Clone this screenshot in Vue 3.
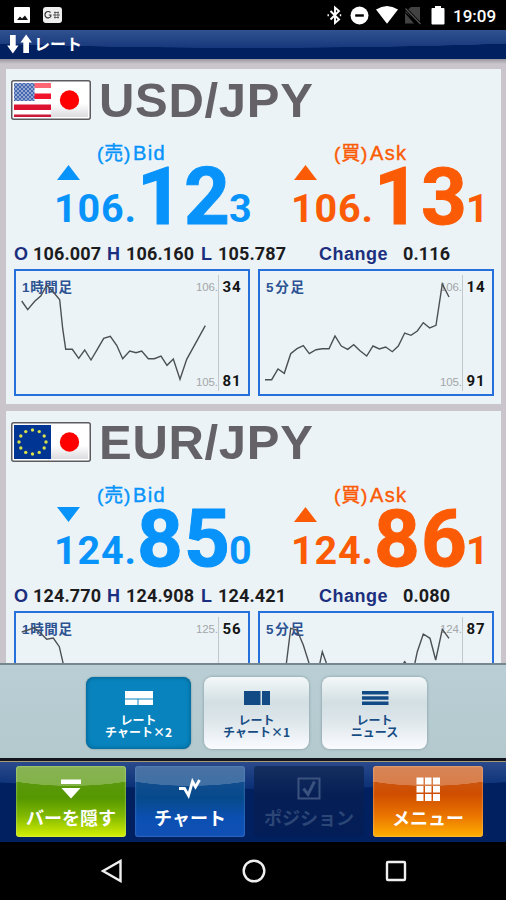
<template>
  <div class="screen">
    <div class="status-bar">
      <svg class="status-left" viewBox="0 0 60 30">
        <rect x="3" y="7" width="16" height="16" rx="1" fill="#fff" />
        <path d="M6 20 L9 16.5 L11 18.5 L14 15.5 L17 20 Z" fill="#111" />
        <rect x="32" y="7" width="19" height="16" rx="3" fill="#eee" />
        <path d="M39.5 12.5 a3.2 3.2 0 1 0 .3 4 v-1.5 h-2" fill="none" stroke="#333" stroke-width="1.2" />
        <path d="M43 12.5 h5 M42 15 h7 M43 17.5 h5 M44 11.5 v7 M47 11.5 v7" stroke="#555" stroke-width=".9" />
      </svg>
      <svg class="status-right" viewBox="0 0 120 30">
        <path d="M4.5 11 L13 19.5 L9 23 V7.5 L13 11 L4.5 19.5" fill="none" stroke="#fff" stroke-width="1.9" />
        <path d="M2.2 14.3 v2 M14.5 14.3 v2" stroke="#fff" stroke-width="1.4" />
        <circle cx="33.5" cy="15.5" r="9" fill="#fff" />
        <rect x="29.2" y="14.3" width="8.6" height="2.4" fill="#000" />
        <path d="M50 9.5 Q61 2.5 72 9.5 L61 23.7 Z" fill="#fff" />
        <path d="M79 12 L94 23 V7 H85 Z" fill="#424242" />
        <path d="M79 13 L88 23.5 H79 Z" fill="#424242" />
        <path d="M79.5 8.5 L94.5 24" stroke="#000" stroke-width="3" />
        <path d="M79.5 8.5 L94.5 24" stroke="#555" stroke-width="1.2" />
        <path d="M109 6 h6 v2 h2.5 q1 0 1 1 v14.5 q0 1 -1 1 h-11 q-1 0 -1 -1 v-14.5 q0 -1 1 -1 h2.5 Z" fill="#fff" />
      </svg>
      <span class="clock">19:09</span>
    </div>

    <header class="title-bar">
      <svg class="title-icon" viewBox="0 0 26 20">
        <path d="M3 0 h6 v11 h3 L6 19.5 L0 11 h3 Z M17 19 h6 V8 h3 L20 -.5 L14 8 h3 Z" fill="#fff" />
      </svg>
      <h1>レート</h1>
    </header>

    <main class="rates">
      <section class="card" v-for="pair in pairs" :key="pair.name">
        <div class="card-head">
          <svg class="flag" viewBox="0 0 80 40">
            <defs>
              <linearGradient :id="'shade-' + pair.flag" x1="0" y1="0" x2="0" y2="1">
                <stop offset=".6" stop-color="#fff" />
                <stop offset="1" stop-color="#dcdce0" />
              </linearGradient>
              <pattern id="stars" width="4" height="4" patternUnits="userSpaceOnUse">
                <rect width="4" height="4" fill="#4668ae" />
                <circle cx="1" cy="1" r=".9" fill="#b8c6e4" />
                <circle cx="3" cy="3" r=".9" fill="#b8c6e4" />
              </pattern>
            </defs>
            <rect x=".75" y=".75" width="78.5" height="38.5" rx="2" fill="#fff" stroke="#5c5c60" stroke-width="1.5" />
            <rect x="40" y="3" width="37" height="34" :fill="'url(#shade-' + pair.flag + ')'" />
            <g v-if="pair.flag === 'us'">
              <rect x="23" y="3" width="17" height="5" fill="#ff6673" />
              <rect x="23" y="13.5" width="17" height="5.5" fill="#f0142c" />
              <rect x="3" y="24.5" width="37" height="5.5" fill="#dd1230" />
              <rect x="3" y="34.5" width="37" height="2.5" fill="#cc1838" />
              <rect x="3" y="3" width="20.5" height="18" fill="url(#stars)" />
            </g>
            <g v-else>
              <rect x="3" y="3" width="37" height="34" fill="#003594" />
              <circle v-for="s in euStars" :key="s.x + '-' + s.y" :cx="s.x" :cy="s.y" r="1.7" fill="#d9e04a" />
            </g>
            <circle cx="58.5" cy="20" r="9.7" fill="#f00" />
          </svg>
          <h2>{{ pair.name }}</h2>
        </div>

        <div class="quotes">
          <div v-for="q in pair.quotes" :key="q.side" class="quote" :class="q.side">
            <div class="quote-label"><span class="kanji">({{ q.kanji }})</span>{{ q.label }}</div>
            <div class="price">
              <div class="price-int">
                <svg class="arrow" viewBox="0 0 23 15">
                  <path :d="q.up ? 'M0 15 L11.5 0 L23 15 Z' : 'M0 0 H23 L11.5 15 Z'" fill="currentColor" />
                </svg>
                <span>{{ q.int }}</span>
              </div>
              <span class="price-big">{{ q.big }}</span>
              <span class="price-small">{{ q.small }}</span>
            </div>
          </div>
        </div>

        <div class="ohlc">
          <b>O</b><span>{{ pair.open }}</span>
          <b>H</b><span>{{ pair.high }}</span>
          <b>L</b><span>{{ pair.low }}</span>
          <b class="change">Change</b><span>{{ pair.change }}</span>
        </div>

        <div class="charts">
          <svg v-for="c in pair.charts" :key="c.label" class="chart" viewBox="0 0 236 127">
            <rect x="1" y="1" width="234" height="125" fill="none" stroke="#2670dc" stroke-width="2" />
            <line x1="204.5" y1="6" x2="204.5" y2="122" stroke="#c3c8cc" />
            <text class="chart-label" x="8" y="23" :textLength="c.labelWidth">{{ c.label }}</text>
            <text class="axis-int" x="182" y="22" textLength="22">{{ c.maxInt }}</text>
            <text class="axis-dec" x="208.5" y="22.5" textLength="18">{{ c.max }}</text>
            <text class="axis-int" x="182" y="116.5" textLength="22">{{ c.minInt }}</text>
            <text class="axis-dec" x="208.5" y="117" textLength="18">{{ c.min }}</text>
            <polyline :points="c.points" fill="none" stroke="#4c5054" stroke-width="1.4" />
          </svg>
        </div>
      </section>
    </main>

    <div class="layout-bar">
      <button class="layout-btn active">
        <svg viewBox="0 0 28 14"><path d="M0 0 H28 V7.5 H0 Z M0 8.5 H12.5 V14 H0 Z M13.5 8.5 H28 V14 H13.5 Z" /></svg>
        <span>レート</span><span>チャート×2</span>
      </button>
      <button class="layout-btn">
        <svg viewBox="0 0 28 14"><path d="M1 0 H17.5 V14 H1 Z M19 0 H27 V14 H19 Z" /></svg>
        <span>レート</span><span>チャート×1</span>
      </button>
      <button class="layout-btn">
        <svg viewBox="0 0 28 14"><path d="M1 0 H27.5 V3.4 H1 Z M1 5.3 H27.5 V8.7 H1 Z M1 10.6 H27.5 V14 H1 Z" /></svg>
        <span>レート</span><span>ニュース</span>
      </button>
    </div>

    <nav class="tab-bar">
      <button class="tab green">
        <svg viewBox="0 0 26 26"><path d="M3 3.5 H23 V8 H3 Z M3.5 12 H22.5 L13 22.5 Z" fill="#fff" /></svg>
        <span>バーを隠す</span>
      </button>
      <button class="tab blue">
        <svg viewBox="0 0 26 26">
          <path d="M2 12.5 H7.5 L11.5 19.5 L15.5 5.5 L18.5 11 L22.5 4" fill="none" stroke="#fff" stroke-width="2.8" />
        </svg>
        <span>チャート</span>
      </button>
      <button class="tab disabled">
        <svg viewBox="0 0 26 26">
          <path d="M2.5 2.5 H23.5 V22.5 H2.5 Z" fill="none" stroke="#3a527e" stroke-width="2" />
          <path d="M7.5 12.5 L12 18.5 L18.5 5.5" fill="none" stroke="#3a527e" stroke-width="3" />
        </svg>
        <span>ポジション</span>
      </button>
      <button class="tab orange">
        <svg viewBox="0 0 26 26">
          <path
            d="M1.5 1.5h7v7h-7z M10 1.5h6.5v7h-6.5z M18 1.5h7v7h-7z M1.5 10h7v6.5h-7z M10 10h6.5v6.5h-6.5z M18 10h7v6.5h-7z M1.5 18h7v7h-7z M10 18h6.5v7h-6.5z M18 18h7v7h-7z"
            fill="#fff"
          />
        </svg>
        <span>メニュー</span>
      </button>
    </nav>

    <div class="system-nav">
      <svg viewBox="0 0 24 24"><path d="M20.5 2 V22 L3 12 Z" /></svg>
      <svg viewBox="0 0 24 24"><circle cx="12" cy="12" r="10.3" /></svg>
      <svg viewBox="0 0 24 24"><rect x="3" y="3" width="18" height="18" rx="1" /></svg>
    </div>
  </div>
</template>

<script setup>
import { ref } from 'vue'

const pairs = ref([
  {
    name: 'USD/JPY',
    flag: 'us',
    quotes: [
      { side: 'bid', kanji: '売', label: 'Bid', up: true, int: '106.', big: '12', small: '3' },
      { side: 'ask', kanji: '買', label: 'Ask', up: true, int: '106.', big: '13', small: '1' }
    ],
    open: '106.007',
    high: '106.160',
    low: '105.787',
    change: '0.116',
    charts: [
      {
        label: '1時間足',
        labelWidth: 50,
        maxInt: '106.',
        max: '34',
        minInt: '105.',
        min: '81',
        points:
          '7.7,32 13.7,40.7 20.7,32.3 26.7,27 32.7,16.3 38.7,22.3 45.7,30.7 48.7,59.7 51.7,80.3 58.3,80.3 64.7,89.3 70.7,81 77,91 83.3,80.3 89.7,69.3 96.3,67.3 102.7,76.3 108.7,89.7 115.7,82 122,83.7 127.7,82 134.3,89.7 140.3,89.7 147,87 153,96.3 159.3,90 166,110.3 172.7,90.3 191.3,56.7'
      },
      {
        label: '5分足',
        labelWidth: 38,
        maxInt: '106.',
        max: '14',
        minInt: '105.',
        min: '91',
        points:
          '7,110.7 13.7,110.7 20,100 26.3,104.3 32.7,84.7 39,79.7 45.3,76.7 51.3,84.7 58,80.7 64.3,79.7 71,79.7 77,67 83.3,77 89.7,80.3 95.7,75.7 102,81.7 108.7,87 115,77 121.3,80 127.7,78 134.3,82.7 140.3,77 146.7,64 153,66.3 159.3,62 165.3,53.7 171.7,59 178,56.3 184.3,15 191,28'
      }
    ]
  },
  {
    name: 'EUR/JPY',
    flag: 'eu',
    quotes: [
      { side: 'bid', kanji: '売', label: 'Bid', up: false, int: '124.', big: '85', small: '0' },
      { side: 'ask', kanji: '買', label: 'Ask', up: true, int: '124.', big: '86', small: '1' }
    ],
    open: '124.770',
    high: '124.908',
    low: '124.421',
    change: '0.080',
    charts: [
      {
        label: '1時間足',
        labelWidth: 50,
        maxInt: '125.',
        max: '56',
        minInt: '124.',
        min: '55',
        points: '7.7,21 14,19 20.3,16.7 26.7,22.3 32.7,28.3 39.3,27 45.3,35.7 49.3,53 53,75'
      },
      {
        label: '5分足',
        labelWidth: 38,
        maxInt: '124.',
        max: '87',
        minInt: '124.',
        min: '60',
        points:
          '28.3,53 32.7,17.3 39,19 45.3,34 51.3,53 58,68 61.7,53 64.3,40.7 68.7,53 75,70 140,60 145,53 146.7,50.7 148.3,53 153,62 156.7,53 159.3,40.7 165.3,23 172,27.3 177.7,49 184.3,18.3 191,27.3'
      }
    ]
  }
])

// twelve stars around the centre of the flag
const euStars = Array.from({ length: 12 }, (_, i) => {
  const a = (i * Math.PI) / 6
  return { x: 21.5 + 13.5 * Math.sin(a), y: 20 - 12 * Math.cos(a) }
})
</script>

<style>
body {
  background: #000;
}
</style>

<style scoped>
.screen {
  display: flex;
  flex-direction: column;
  width: 506px;
  height: 900px;
  overflow: hidden;
  background: #000;
  font-family: 'Liberation Sans', 'Noto Sans CJK JP', sans-serif;
}
h1,
h2 {
  margin: 0;
}
button {
  border: 0;
  padding: 0;
  font-family: 'Noto Sans CJK JP', sans-serif;
  font-weight: bold;
}

.status-bar {
  display: flex;
  align-items: center;
  flex: none;
  height: 30px;
  padding: 0 10px 0 11px;
}
.status-left {
  width: 60px;
  height: 30px;
}
.status-right {
  width: 120px;
  height: 30px;
  margin-left: auto;
}
.clock {
  width: 43px;
  margin-left: 7px;
  color: #fff;
  font: 500 17px/30px Roboto, sans-serif;
  padding-top: 2px;
  white-space: nowrap;
}

.title-bar {
  display: flex;
  align-items: center;
  flex: none;
  height: 29px;
  padding-left: 7px;
  background:
    radial-gradient(ellipse 400px 18px at 250px 0, transparent 98%, #00205f 100%),
    linear-gradient(#31528f, #17377c 18px, #001f5c);
}
.title-icon {
  width: 25px;
  height: 19px;
  overflow: visible;
}
.title-bar h1 {
  margin-left: 2px;
  color: #fff;
  font-size: 16px;
  line-height: 32px;
}

.rates {
  flex: none;
  height: 604px;
  box-sizing: border-box;
  overflow: hidden;
  padding: 10px 5px 0 6px;
  background: linear-gradient(#9a969f, #cac5cb 5px);
}
.card {
  box-sizing: border-box;
  height: 335px;
  margin-bottom: 7px;
  padding-top: 11px;
  background: #ebf3f7;
}
.card-head {
  display: flex;
  height: 40px;
  padding-left: 5px;
}
.flag {
  width: 80px;
  height: 40px;
}
.card-head h2 {
  margin-left: 8px;
  color: #646267;
  font-size: 49px;
  line-height: 41px;
  letter-spacing: 0.7px;
}

.quotes {
  display: grid;
  grid-template-columns: 237px 237px;
  padding: 22px 0 0 48px;
}
.bid {
  color: #0893fb;
}
.ask {
  color: #fc5b05;
}
.quote-label {
  padding-left: 43px;
  font-size: 20px;
  line-height: 22px;
  height: 20px;
  letter-spacing: 1.3px;
  -webkit-text-stroke: 0.4px;
}
.kanji {
  font-size: 19px;
  letter-spacing: 0.8px;
  margin-right: 2px;
}
.price {
  display: flex;
  align-items: flex-end;
  height: 64px;
  font-family: Roboto, sans-serif;
  font-weight: bold;
}
.price-int {
  display: flex;
  flex-direction: column;
  width: 83px;
  font-size: 39.5px;
  line-height: 31px;
  letter-spacing: 0.8px;
  margin-bottom: 2px;
}
.arrow {
  width: 23px;
  height: 15px;
  margin: 0 0 13px 3px;
}
.price-big {
  width: 92px;
  font-size: 80px;
  line-height: 58px;
  letter-spacing: 1px;
  -webkit-text-stroke: 1px;
}
.price-small {
  font-size: 39.5px;
  line-height: 31px;
  margin-bottom: 2px;
}

.ohlc {
  display: grid;
  grid-template-columns: 19px 74px 19px 75px 17px 101px 84px auto;
  padding: 16px 0 0 8px;
  color: #1c1c1e;
  font-size: 18px;
  font-weight: bold;
  line-height: 24px;
  letter-spacing: 0.5px;
  white-space: nowrap;
}
.ohlc b {
  color: #1b2f7e;
}
.ohlc span {
  font-family: Roboto, sans-serif;
  letter-spacing: 0.15px;
}

.charts {
  display: flex;
  gap: 8px;
  padding: 3px 0 0 8px;
}
.chart {
  width: 236px;
  height: 127px;
}
.chart-label {
  fill: #2c5292;
  font-size: 13.5px;
  font-weight: bold;
}
.axis-int {
  fill: #a4a6a8;
  font-size: 11.5px;
}
.axis-dec {
  fill: #141414;
  font-family: Roboto, sans-serif;
  font-size: 15px;
  font-weight: bold;
}

.layout-bar {
  display: flex;
  flex: none;
  gap: 13px;
  box-sizing: border-box;
  height: 95px;
  padding: 12px 0 0 86px;
  border-top: 2px solid #75868e;
  background: linear-gradient(#bacfd5, #b4c9ce);
}
.layout-btn {
  display: flex;
  flex-direction: column;
  align-items: center;
  box-sizing: border-box;
  width: 105px;
  height: 72px;
  padding-top: 14px;
  border-radius: 8px;
  background: linear-gradient(#f4f8f9, #d2dfe3 35%, #dde6ea 60%, #fafbff);
  box-shadow: 0 0 3px #7b9199;
  color: #174d85;
  font-size: 12px;
  line-height: 12px;
}
.layout-btn svg {
  width: 28px;
  height: 14px;
  margin-bottom: 9px;
  fill: #124a86;
}
.layout-btn.active {
  background: #0883bd;
  box-shadow: inset 0 0 4px #03577f, 0 0 2px #6c8791;
  color: #fff;
}
.layout-btn.active svg {
  fill: #fff;
}

.tab-bar {
  display: flex;
  flex: none;
  gap: 9px;
  box-sizing: border-box;
  height: 84px;
  padding: 5px 0 0 16px;
  border-top: 3px solid #14141e;
  background:
    linear-gradient(#a89a70, #a89a70) 0 0 / 100% 1px no-repeat,
    radial-gradient(ellipse 400px 28px at 250px 0, transparent 98%, #00205f 100%),
    linear-gradient(#2b4b8c, #0a2f76 28px, #001a55);
}
.tab {
  display: flex;
  flex-direction: column;
  align-items: center;
  box-sizing: border-box;
  width: 110px;
  height: 71px;
  padding-top: 10px;
  border-radius: 3px;
  color: #fff;
  font-size: 18px;
  line-height: 22px;
  white-space: nowrap;
}
.tab svg {
  width: 26px;
  height: 26px;
  margin-bottom: 4px;
}
.green {
  background:
    radial-gradient(ellipse 90px 20px at 50% 0, rgba(255, 255, 255, 0.25) 98%, transparent 100%),
    linear-gradient(#609a1a, #559700 45%, #80b800 70%, #d6f000);
  box-shadow: inset 0 0 2px #d8ecb0;
}
.blue {
  background:
    radial-gradient(ellipse 90px 20px at 50% 0, rgba(255, 255, 255, 0.2) 98%, transparent 100%),
    linear-gradient(#1c4f90, #064a8c 45%, #0c50b4 75%, #1150b4);
  box-shadow: inset 0 0 2px #6d95d0;
}
.disabled {
  background: linear-gradient(#152f60, #061f55 40%, #031d58);
  color: #2c4676;
}
.orange {
  background:
    radial-gradient(ellipse 90px 20px at 50% 0, rgba(255, 255, 255, 0.25) 98%, transparent 100%),
    linear-gradient(#c85c20, #cf4e00 40%, #ea7400 70%, #ffb000);
  box-shadow: inset 0 0 2px #ffd0a0;
}

.system-nav {
  display: flex;
  justify-content: space-between;
  align-items: center;
  flex: none;
  height: 58px;
  padding: 0 98px 0 100px;
}
.system-nav svg {
  width: 24px;
  height: 24px;
  fill: none;
  stroke: #f0f0f0;
  stroke-width: 2.4;
}
</style>
